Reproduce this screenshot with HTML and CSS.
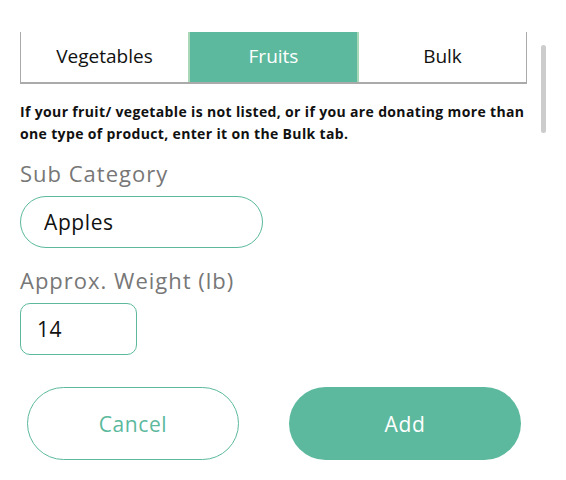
FILE: index.html
```html
<!DOCTYPE html>
<html lang="en">
  <head>
    <meta charset="UTF-8" />
    <meta name="viewport" content="width=device-width, initial-scale=1.0" />
    <title>Add Donation</title>
    <link rel="stylesheet" href="styles.css">
  </head>
  <body>
    <div class="scroll-track"><div class="scroll-thumb"></div></div>
    <div class="donation-form">
      <div class="tabs">
        <div class="tab">Vegetables</div>
        <div class="tab active">Fruits</div>
        <div class="tab">Bulk</div>
      </div>
      <p class="note">
        If your fruit/ vegetable is not listed, or if you are donating more than
        one type of product, enter it on the Bulk tab.
      </p>
      <div class="field">
        <label for="subcategory">Sub Category</label>
        <input type="text" id="subcategory" class="pill-input" value="Apples" />
      </div>
      <div class="field">
        <label for="weight">Approx. Weight (lb)</label>
        <input type="text" id="weight" class="small-input" value="14" />
      </div>
      <div class="actions">
        <button class="btn cancel">Cancel</button>
        <button class="btn add">Add</button>
      </div>
    </div>
  </body>
</html>
```
FILE: styles.css
```css
body {
  font-family: "Open Sans", "Noto Sans", sans-serif;
  background: #ffffff;
  margin: 0;
  position: relative;
  height: 480px;
  overflow: hidden;
}

.donation-form {
  padding: 32px 39px 0 20px;
}

.tabs {
  display: flex;
  height: 52px;
  border-left: 1px solid #aaa;
  border-right: 1px solid #aaa;
  border-bottom: 2px solid #aaa;
  box-sizing: border-box;
}

.tab {
  flex: 1;
  display: flex;
  align-items: center;
  justify-content: center;
  font-size: 19px;
  color: #111;
  padding-bottom: 2px;
}

.tab.active {
  background-color: #5cb99d;
  color: #ffffff;
  border-left: 2px solid #a8d8b8;
  border-right: 2px solid #a8d8b8;
}

.note {
  margin: 17px 0 0;
  font-size: 14px;
  font-weight: bold;
  letter-spacing: 0.35px;
  line-height: 22px;
  color: #111;
}

.field {
  margin-top: 13px;
}

label {
  display: block;
  font-size: 22px;
  letter-spacing: 1px;
  color: #777;
  margin-bottom: 8px;
}

.field + .field {
  margin-top: 17px;
}

input {
  font-family: "Open Sans", "Noto Sans", sans-serif;
  font-size: 21px;
  letter-spacing: 0.6px;
  color: #111;
  border: 1.5px solid #5cb99d;
  box-sizing: border-box;
  height: 52px;
  outline: none;
}

.pill-input {
  width: 243px;
  border-radius: 26px;
  padding: 0 23px;
}

.small-input {
  width: 117px;
  border-radius: 10px;
  padding: 0 16px;
}

.actions {
  display: flex;
  gap: 50px;
  margin-top: 32px;
  padding-left: 7px;
}

.btn {
  font-family: "Open Sans", "Noto Sans", sans-serif;
  height: 73px;
  border-radius: 37px;
  font-size: 21px;
  letter-spacing: 0.6px;
  cursor: pointer;
}

.cancel {
  width: 212px;
  background: #ffffff;
  color: #5cb99d;
  border: 1.5px solid #5cb99d;
}

.add {
  width: 232px;
  background: #5cb99d;
  color: #ffffff;
  border: none;
}

.scroll-track {
  position: absolute;
  left: 541px;
  top: 45px;
  width: 5px;
  height: 88px;
}

.scroll-thumb {
  height: 100%;
  background: #cccccc;
  border-radius: 3px;
}
```
